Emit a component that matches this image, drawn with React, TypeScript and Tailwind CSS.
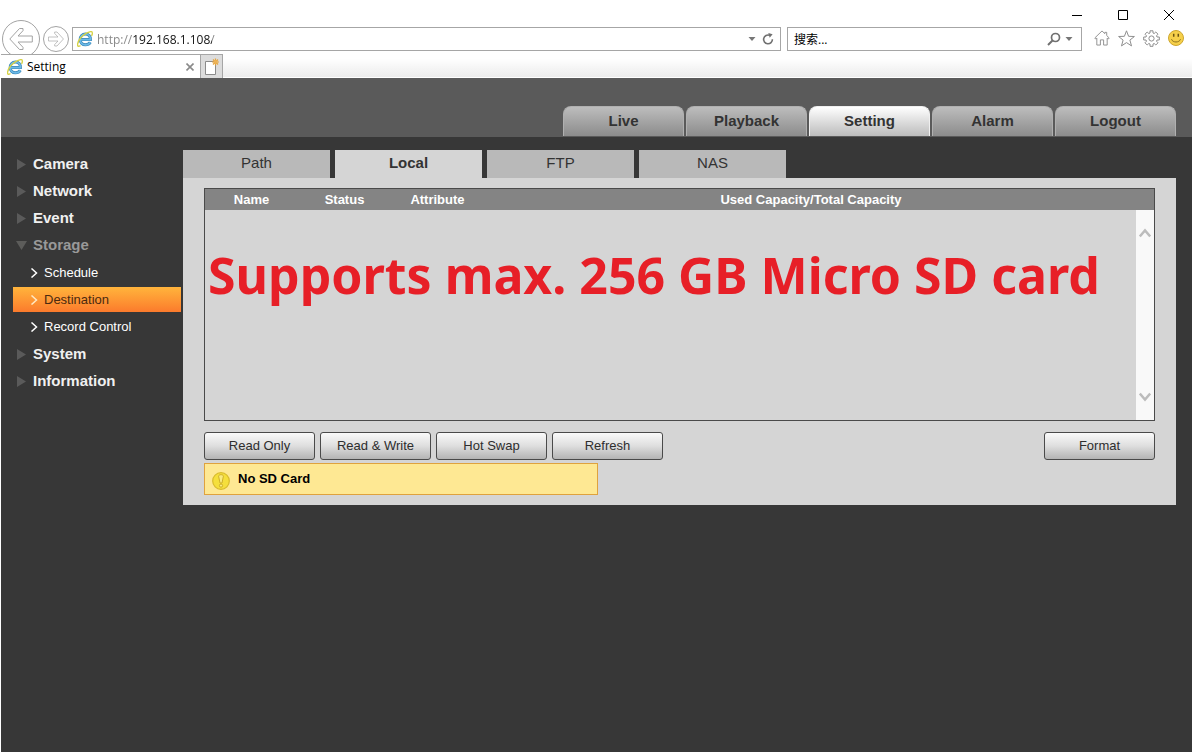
import type { ReactNode } from 'react';

const chromeFont = 'font-["Open_Sans","Noto_Sans_CJK_SC",sans-serif]';

function IeLogo() {
  return (
    <svg viewBox="0 0 16 16" className="size-4 shrink-0" aria-hidden="true">
      <path
        d="M3.300 8.600H13.400C13.600 5.100 11.500 3 8.500 3C5.400 3 3.200 5.300 3.200 8.500C3.200 11.700 5.400 13.800 8.500 13.800C10.700 13.800 12.400 12.900 13.300 11.300"
        fill="none"
        stroke="#3a86b8"
        strokeWidth="3"
      />
      <path
        d="M3.300 8.600H13.400C13.600 5.100 11.500 3 8.500 3C5.400 3 3.200 5.300 3.200 8.500C3.200 11.700 5.400 13.800 8.500 13.800C10.700 13.800 12.400 12.900 13.300 11.300"
        fill="none"
        stroke="#6bb9e6"
        strokeWidth="1.700"
      />
      <path
        d="M3 14.900C1 15.900 0 15 .7 12.700C1.500 9.500 4.600 5.300 8.300 2.900C11.500 .8 14.600 0 15.200 1.300C15.600 2.100 15.300 3.300 14.800 4.400"
        fill="none"
        stroke="#d6d246"
        strokeWidth="1.400"
        strokeLinecap="round"
      />
    </svg>
  );
}

function ArrowOutline({ className }: { className: string }) {
  return (
    <svg viewBox="0 0 24 24" className={className} fill="none" stroke="#a3a3a3" strokeLinejoin="round" aria-hidden="true">
      <path d="M.8 12 10.500 1.500H14V3.700L9 9H23.300V15H9L14 20.300V22.500H10.500Z" />
    </svg>
  );
}

function DropArrow() {
  return (
    <svg viewBox="0 0 8 4" className="h-1 w-2" fill="#777" aria-hidden="true">
      <path d="M.5 0H7.500L4 4Z" />
    </svg>
  );
}

function IconButton({ label, children, className = '' }: { label: string; children: ReactNode; className?: string }) {
  return (
    <button type="button" aria-label={label} className={`flex shrink-0 items-center justify-center ${className}`}>
      {children}
    </button>
  );
}

function BrowserChrome() {
  return (
    <header className={`bg-white text-[13px] text-black ${chromeFont}`}>
      <div className="flex h-5 items-end justify-end gap-9 pr-[18px]">
        <IconButton label="Minimize">
          <svg viewBox="0 0 10 10" className="size-2.5" stroke="#000"><path d="M0 5.500H10" /></svg>
        </IconButton>
        <IconButton label="Maximize">
          <svg viewBox="0 0 10 10" className="size-2.5" fill="none" stroke="#000"><path d="M.5 .5H9.500V9.500H.5Z" /></svg>
        </IconButton>
        <IconButton label="Close">
          <svg viewBox="0 0 10 10" className="size-2.5" stroke="#000"><path d="M0 0 10 10M10 0 0 10" /></svg>
        </IconButton>
      </div>

      <div className="flex h-[38px] items-center pr-2 pl-px">
        <IconButton label="Back" className="size-[38px] rounded-full border border-[#a3a3a3]">
          <ArrowOutline className="size-6" />
        </IconButton>
        <IconButton label="Forward" className="ml-[3px] size-[26px] rounded-full border border-[#a3a3a3]">
          <ArrowOutline className="size-4 rotate-180" />
        </IconButton>
        <div className="ml-[3px] flex h-6 min-w-0 flex-1 items-center border border-[#a6a6a6] pr-1.5 pl-1">
          <IeLogo />
          <input
            aria-label="Address"
            defaultValue="http://192.168.1.108/"
            className="ml-1 h-5 min-w-0 flex-1 bg-[linear-gradient(90deg,#858585_36px,#111_36px,#111_115px,#858585_115px)] bg-clip-text text-[12px] text-transparent outline-none"
          />
          <IconButton label="Show address list"><DropArrow /></IconButton>
          <IconButton label="Reload" className="ml-1.5">
            <svg viewBox="0 0 12 12" className="size-3" fill="none" stroke="#707070" strokeWidth="1.600" aria-hidden="true">
              <path d="M10.400 6.200A4.400 4.400 0 1 1 7.600 2.300" />
              <path d="M6.300 0 10.600 1.200 7.700 4.800Z" fill="#707070" stroke="none" />
            </svg>
          </IconButton>
        </div>
        <div className="ml-1.5 flex h-6 w-[295px] shrink-0 items-center border border-[#a6a6a6] pr-2 pl-1.5">
          <input
            aria-label="Search"
            placeholder="搜索..."
            className="h-5 min-w-0 flex-1 text-[12px] outline-none placeholder:text-black"
          />
          <IconButton label="Run search">
            <svg viewBox="0 0 14 14" className="size-3.5" fill="none" stroke="#707070" aria-hidden="true">
              <circle cx="8.500" cy="5.500" r="4" strokeWidth="1.700" />
              <path d="M5.500 8.500 1 13" strokeWidth="2" />
            </svg>
          </IconButton>
          <IconButton label="Search options" className="ml-1"><DropArrow /></IconButton>
        </div>
        <div className="ml-3 flex shrink-0 items-center gap-2 pb-0.5">
          <IconButton label="Home">
            <svg viewBox="0 0 17 17" className="size-4" fill="none" stroke="#8e8e8e" strokeLinejoin="round">
              <path d="M8.500 1 .8 8.500 1.900 9.600 3 8.600V16H6.800V10.500H10.200V16H14V8.600L15.100 9.600 16.200 8.500 13.500 5.900V2.500H11.500V3.900Z" />
            </svg>
          </IconButton>
          <IconButton label="Favorites">
            <svg viewBox="0 0 17 17" className="size-[17px]" fill="none" stroke="#8e8e8e" strokeLinejoin="round">
              <path d="M8.500 .8 10.600 6.300 16.400 6.500 11.900 10.100 13.500 15.900 8.500 12.600 3.500 15.900 5.100 10.100 .6 6.500 6.400 6.300Z" />
            </svg>
          </IconButton>
          <IconButton label="Tools">
            <svg viewBox="0 0 17 17" className="size-[17px]" fill="none" stroke="#8e8e8e" strokeLinejoin="round">
              <path d="M7 .8H10V3L11.200 3.500 12.800 2 15 4.200 13.500 5.800 14 7H16.300V10H14L13.500 11.200 15 12.800 12.800 15 11.200 13.500 10 14V16.300H7V14L5.800 13.500 4.200 15 2 12.800 3.500 11.200 3 10H.7V7H3L3.500 5.800 2 4.200 4.200 2 5.800 3.500 7 3Z" />
              <circle cx="8.500" cy="8.500" r="2.600" />
            </svg>
          </IconButton>
          <IconButton label="Send a smile">
            <svg viewBox="0 0 16 16" className="size-4">
              <circle cx="8" cy="8" r="7.500" fill="#f6d04a" stroke="#cda62f" />
              <path d="M5.700 3.800V6.800M10.300 3.800V6.800" stroke="#6b5312" strokeWidth="1.500" />
              <path d="M3.500 9.200C4.500 12.900 11.500 12.900 12.500 9.200" fill="none" stroke="#8f7320" />
            </svg>
          </IconButton>
        </div>
      </div>

      <div className="relative -mt-1 flex h-6">
        <div className="flex w-[200px] items-center border-t border-r border-[#a6a6a6] bg-white pr-1.5 pl-1.5 text-[12px]">
          <IeLogo />
          <span className="ml-1 flex-1">Setting</span>
          <IconButton label="Close tab">
            <svg viewBox="0 0 8 8" className="size-2" stroke="#8a8a8a" strokeWidth="1.600"><path d="M.5 .5 7.500 7.500M7.500 .5 .5 7.500" /></svg>
          </IconButton>
        </div>
        <IconButton label="New tab" className="w-[22px] border-t border-r border-[#a6a6a6] bg-[#dcdcdc]">
          <svg viewBox="0 0 16 18" className="h-[18px] w-4">
            <path d="M1.500 3.500H11.500V16.500H1.500Z" fill="#fff" stroke="#8b8b8b" />
            <path d="M11.500 .5V7.500M8 4H15M9 1.500 14 6.500M14 1.500 9 6.500" stroke="#e5a33c" strokeWidth="1.200" />
            <circle cx="11.500" cy="4" r="2" fill="#edb254" />
          </svg>
        </IconButton>
        <div className="flex-1 border-b border-white bg-linear-to-b from-white from-20% to-[#ececec]" />
      </div>
    </header>
  );
}

const topTabs = ['Live', 'Playback', 'Setting', 'Alarm', 'Logout'];

function TopNav() {
  return (
    <nav aria-label="Main" className="flex h-[59px] items-end justify-end gap-0.5 bg-[#5a5a5a] pr-4 pb-px">
      {topTabs.map((tab) => (
        <button
          key={tab}
          type="button"
          aria-current={tab === 'Setting' ? 'page' : undefined}
          className={`h-[30px] w-[121px] rounded-t-lg border-x border-t text-[15px] font-bold text-[#333] ${
            tab === 'Setting'
              ? 'border-[#efefef] bg-linear-to-b from-white to-[#bcbcbc]'
              : 'border-[#b0b0b0] bg-linear-to-b from-[#bdbdbd] to-[#8c8c8c]'
          }`}
        >
          {tab}
        </button>
      ))}
    </nav>
  );
}

function MenuGroup({ label, open = false, children }: { label: string; open?: boolean; children?: ReactNode }) {
  return (
    <li>
      <button
        type="button"
        aria-expanded={open}
        className={`flex h-[27px] w-full items-center gap-1.5 pl-[15px] text-[15px] font-bold ${open ? 'text-[#999]' : 'text-[#f0f0f0]'}`}
      >
        <svg viewBox="0 0 11 11" className="size-[11px]" aria-hidden="true">
          {open ? <path d="M0 1H11L5.500 10Z" fill="#5c5c5a" /> : <path d="M1 0 10 5.500 1 11Z" fill="#5a5a5a" />}
        </svg>
        {label}
      </button>
      {children}
    </li>
  );
}

function SubItem({ label, active = false }: { label: string; active?: boolean }) {
  return (
    <li className="flex h-[27px] items-center pr-0.5 pl-3">
      <a
        href="#"
        aria-current={active ? 'page' : undefined}
        className={`flex h-[25px] flex-1 items-center gap-1.5 pl-[17px] text-[13px] ${
          active ? 'bg-linear-to-b from-[#ffb43c] to-[#fb7a2c] text-[#4a2a10]' : 'text-white'
        }`}
      >
        <svg viewBox="0 0 8 10" className="h-2.5 w-2" fill="none" stroke={active ? '#ffe9c4' : '#fff'} strokeWidth="1.500" aria-hidden="true">
          <path d="M1.500 .5 6.500 5 1.500 9.500" />
        </svg>
        {label}
      </a>
    </li>
  );
}

function Sidebar() {
  return (
    <nav aria-label="Settings" className="w-[182px] shrink-0 pt-px">
      <ul>
        <MenuGroup label="Camera" />
        <MenuGroup label="Network" />
        <MenuGroup label="Event" />
        <MenuGroup label="Storage" open>
          <ul className="pb-px">
            <SubItem label="Schedule" />
            <SubItem label="Destination" active />
            <SubItem label="Record Control" />
          </ul>
        </MenuGroup>
        <MenuGroup label="System" />
        <MenuGroup label="Information" />
      </ul>
    </nav>
  );
}

function PushButton({ children }: { children: ReactNode }) {
  return (
    <button
      type="button"
      className="h-7 w-[111px] rounded-[3px] border border-[#4a4a4a] bg-linear-to-b from-[#fafafa] via-[#dedede] to-[#b4b4b4] text-[13px] text-[#2e2e2e]"
    >
      {children}
    </button>
  );
}

const pageTabs = ['Path', 'Local', 'FTP', 'NAS'];

function StoragePanel() {
  return (
    <main className="min-w-0 flex-1">
      <div role="tablist" className="flex gap-[5px]">
        {pageTabs.map((tab) => (
          <button
            key={tab}
            type="button"
            role="tab"
            aria-selected={tab === 'Local'}
            className={`h-7 w-[147px] pb-0.5 text-[15px] text-[#333] ${tab === 'Local' ? 'bg-[#d5d5d5] font-bold' : 'bg-[#b9b9b9]'}`}
          >
            {tab}
          </button>
        ))}
      </div>
      <div role="tabpanel" className="bg-[#d5d5d5] px-[21px] py-2.5">
        <div className="border border-[#4a4a4a]">
          <div className="bg-[#848484] pr-4">
            <table className="w-full table-fixed text-[13px] text-white">
              <thead>
                <tr className="h-[21px]">
                  <th className="w-[93px] p-0 leading-5">Name</th>
                  <th className="w-[93px] p-0 leading-5">Status</th>
                  <th className="w-[93px] p-0 leading-5">Attribute</th>
                  <th className="p-0 leading-5">Used Capacity/Total Capacity</th>
                </tr>
              </thead>
            </table>
          </div>
          <div className="flex h-[210px]">
            <p className="flex-1 pt-8 pl-[3px] font-['Noto_Sans',sans-serif] text-[50px] leading-[66px] font-bold whitespace-nowrap text-[#e71f27]">
              Supports max. 256 GB Micro SD card
            </p>
            <div className="flex w-[18px] flex-col justify-between bg-[#f9f9f9] py-[18px]">
              <IconButton label="Scroll up">
                <svg viewBox="0 0 12 10" className="h-2.5 w-3" fill="none" stroke="#bcbcbc" strokeWidth="2.500"><path d="M.8 8.500 6 2.500 11.200 8.500" /></svg>
              </IconButton>
              <IconButton label="Scroll down">
                <svg viewBox="0 0 12 10" className="h-2.5 w-3" fill="none" stroke="#bcbcbc" strokeWidth="2.500"><path d="M.8 1.500 6 7.500 11.200 1.500" /></svg>
              </IconButton>
            </div>
          </div>
        </div>
        <div className="mt-[11px] flex gap-[5px]">
          <PushButton>Read Only</PushButton>
          <PushButton>Read &amp; Write</PushButton>
          <PushButton>Hot Swap</PushButton>
          <PushButton>Refresh</PushButton>
          <div className="ml-auto"><PushButton>Format</PushButton></div>
        </div>
        <div role="status" className="mt-[3px] flex h-8 w-[394px] max-w-full items-center gap-2 border border-[#dfa23e] bg-[#fee893] pl-[7px] text-[13px] font-bold text-black">
          <svg viewBox="0 0 18 18" className="mt-1 size-[18px]" aria-hidden="true">
            <circle cx="9" cy="9" r="8.300" fill="#f5df3c" stroke="#d9bb2c" strokeWidth="1.200" />
            <path d="M6.600 4.200C6.600 2.200 11.400 2.200 11.400 4.200L10 11H8Z" fill="#f9ea80" stroke="#c9a922" strokeWidth="0.900" />
            <circle cx="9" cy="13.600" r="1.600" fill="#f9ea80" stroke="#c9a922" strokeWidth="0.900" />
          </svg>
          No SD Card
        </div>
      </div>
    </main>
  );
}

export default function App() {
  return (
    <div className="flex min-h-screen flex-col bg-white pb-0.5 pl-px font-['Liberation_Sans',Arial,sans-serif]">
      <BrowserChrome />
      <TopNav />
      <div className="flex flex-1 items-start bg-[#373737] pt-[13px] pr-4">
        <Sidebar />
        <StoragePanel />
      </div>
    </div>
  );
}
